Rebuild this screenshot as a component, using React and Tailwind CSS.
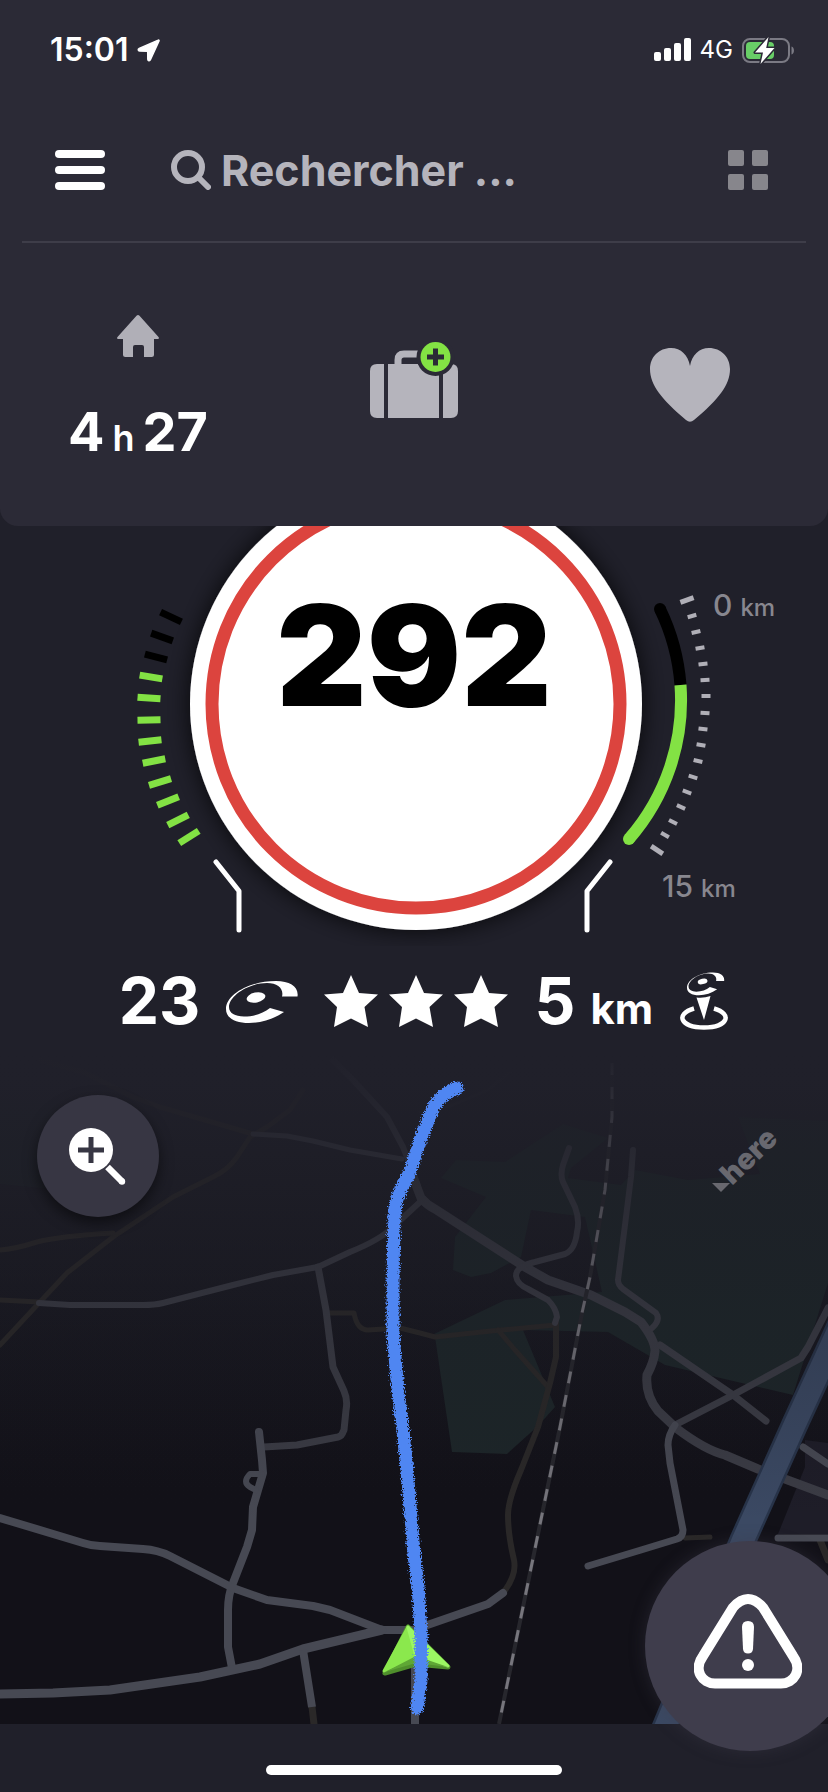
import React from "react";

const LEFT_TICKS = [
  [171, 617], [162, 637], [156, 657], [151, 677], [149, 698], [149, 720],
  [150, 741], [154, 761], [160, 782], [168, 801], [178, 820], [189, 837],
];

const RIGHT_TICKS = [
  [687, 600], [692, 616], [696, 632], [700, 648], [703, 664], [705, 680],
  [706, 696], [705, 713], [703, 729], [701, 745], [698, 761], [693, 777],
  [687, 792], [681, 807], [673, 822], [665, 835], [657, 850],
];

function StatusBar() {
  return (
    <div className="flex h-[100px] items-center justify-between pl-[50px] pr-[33px]">
      <div className="flex items-center gap-2">
        <time className="text-[32px] font-semibold leading-none">15:01</time>
        <svg className="h-6 w-6" viewBox="0 0 24 24" aria-hidden="true">
          <path d="M21.200 2.200 2.200 10.400c-1.500.7-1.200 2.600.3 2.600l8.200.2.100 8.100c0 1.600 1.900 2 2.600.5L22 3c.3-.7-.1-1.200-.8-.8Z" fill="#fff" stroke="#fff" strokeWidth="1.500" strokeLinejoin="round" />
        </svg>
      </div>
      <div className="flex items-center gap-2">
        <svg className="h-6 w-[38px]" viewBox="0 0 38 24" fill="#fff" aria-hidden="true">
          <rect x="0" y="14" width="7" height="9" rx="2" />
          <rect x="10" y="10" width="7" height="13" rx="2" />
          <rect x="20" y="5" width="7" height="18" rx="2" />
          <rect x="30" y="0" width="7" height="23" rx="2" />
        </svg>
        <span className="text-2xl leading-none">4G</span>
        <svg className="h-7 w-[54px]" viewBox="0 0 54 28" aria-hidden="true">
          <rect x="2" y="3" width="46" height="23" rx="7" fill="none" stroke="#7b7a84" strokeWidth="2" />
          <path d="M50.500 10.500c3.300 1 3.300 7 0 8Z" fill="#7b7a84" />
          <rect x="5" y="6" width="28" height="17" rx="4" fill="#68ce67" />
          <path d="M27.500 1 14 16.500h8L19.500 28 33.500 12h-8.300Z" fill="#fff" stroke="#2b2a36" strokeWidth="3" paintOrder="stroke" strokeLinejoin="round" />
        </svg>
      </div>
    </div>
  );
}

function SearchBar() {
  return (
    <div className="mx-[22px] flex h-[143px] items-center border-b-2 border-[#3e3d49] pb-0.5 pl-[33px] pr-[38px]">
      <button type="button" aria-label="Menu" className="flex w-[50px] flex-col gap-2">
        <span className="h-2 rounded-full bg-white" />
        <span className="h-2 rounded-full bg-white" />
        <span className="h-2 rounded-full bg-white" />
      </button>
      <label className="ml-[66px] flex min-w-0 flex-1 items-center gap-2.5">
        <svg className="h-10 w-10 shrink-0" viewBox="0 0 40 40" fill="none" stroke="#b5b4bc" aria-hidden="true">
          <circle cx="17" cy="17" r="14" strokeWidth="6" />
          <path d="m27.500 27.500 9.500 9.500" strokeWidth="6" strokeLinecap="round" />
        </svg>
        <input
          type="search"
          aria-label="Rechercher"
          placeholder="Rechercher ..."
          className="w-full min-w-0 bg-transparent text-[43px] font-bold leading-none text-white outline-none placeholder:text-[#b5b4bc]"
        />
      </label>
      <button type="button" aria-label="Applications" className="grid grid-cols-2 gap-2">
        <span className="h-4 w-4 rounded-xs bg-[#87868c]" />
        <span className="h-4 w-4 rounded-xs bg-[#87868c]" />
        <span className="h-4 w-4 rounded-xs bg-[#87868c]" />
        <span className="h-4 w-4 rounded-xs bg-[#87868c]" />
      </button>
    </div>
  );
}

function Shortcuts() {
  return (
    <nav className="grid h-[283px] grid-cols-3 place-items-center">
      <button type="button" aria-label="Domicile, 4 h 27" className="flex flex-col items-center gap-12 pt-1">
        <svg className="h-[42px] w-[42px]" viewBox="0 0 42 42" fill="#b0afb7" aria-hidden="true">
          <path d="M19.500.800a2.200 2.200 0 0 1 3 0L41.500 22c.8 1 .4 2-1 2H37v15.500a2.500 2.500 0 0 1-2.500 2.500H27V32a2 2 0 0 0-2-2h-7a2 2 0 0 0-2 2v10H8.500A2.500 2.500 0 0 1 6 39.500V24H1.500c-1.400 0-1.800-1-1-2Z" />
        </svg>
        <span className="flex items-baseline gap-2 text-[54px] font-bold leading-none">
          4<span className="text-4xl font-semibold leading-none">h</span>27
        </span>
      </button>
      <button type="button" aria-label="Ajouter un trajet" className="pb-2.5">
        <svg className="h-[80px] w-[88px]" viewBox="0 0 88 80" aria-hidden="true">
          <path d="M28 25v-5q0-6 6-6h22" fill="none" stroke="#b5b4bc" strokeWidth="7" />
          <path d="M7 24h7v54H7q-7 0-7-7V31q0-7 7-7ZM18 24h51v54H18ZM73 24h8q7 0 7 7v40q0 7-7 7h-8Z" fill="#b5b4bc" />
          <circle cx="65.500" cy="17" r="19" fill="#2b2a36" />
          <circle cx="65.500" cy="17" r="15" fill="#83e244" />
          <path d="M57 17h17M65.500 8.500v17" stroke="#2b2a36" strokeWidth="5" />
        </svg>
      </button>
      <button type="button" aria-label="Favoris">
        <svg className="h-[74px] w-20" viewBox="0 0 80 74" fill="#b5b4bc" aria-hidden="true">
          <path d="M40 18C38 7 31 0 21 0 9 0 0 9 0 21c0 16 12 31 36 51q4 3.500 8 0C68 52 80 37 80 21 80 9 71 0 59 0 49 0 42 7 40 18Z" />
        </svg>
      </button>
    </nav>
  );
}

function Dial() {
  return (
    <section aria-label="Vitesse" className="flex h-[420px] justify-center">
      <div className="relative w-[720px] shrink-0">
        <svg className="h-full w-full" viewBox="54 526 720 420" aria-hidden="true">
          <defs>
            <filter id="dialShadow" x="-20%" y="-20%" width="140%" height="140%">
              <feDropShadow dx="0" dy="0" stdDeviation="12" floodColor="#08080c" floodOpacity="0.8" />
            </filter>
          </defs>
          <circle cx="416" cy="704" r="226" fill="#fff" filter="url(#dialShadow)" />
          <circle cx="416" cy="704" r="204" fill="none" stroke="#dc443e" strokeWidth="13" />
          {LEFT_TICKS.map(([x, y], i) => (
            <rect key={y} x={x - 11.5} y={y - 3.5} width="23" height="7" fill={i < 3 ? "#000" : "#83e244"} transform={`rotate(${25 - i * 5.2} ${x} ${y})`} />
          ))}
          {RIGHT_TICKS.map(([x, y], i) => {
            const long = i === 0 || i === 16;
            const w = long ? 14 : 9;
            const h = long ? 5 : 4;
            return <rect key={y} x={x - w / 2} y={y - h / 2} width={w} height={h} fill="#b0afb7" transform={`rotate(${-20 + i * 3.35} ${x} ${y})`} />;
          })}
          <g fill="none" strokeWidth="12">
            <path d="M660 609A211 211 0 0 1 680.500 685" stroke="#000" />
            <path d="M680.500 685A211 211 0 0 1 629 839" stroke="#83e244" />
          </g>
          <circle cx="660" cy="609" r="6" fill="#000" />
          <circle cx="629" cy="839" r="6" fill="#83e244" />
          <path d="m216 862 23 29v39M610 862l-23 29v39" fill="none" stroke="#fff" strokeWidth="5" strokeLinecap="round" strokeLinejoin="round" />
        </svg>
        <p className="absolute inset-x-0 top-[59px] text-center text-[140px] font-black leading-none text-black">292</p>
        <p className="absolute left-[659px] top-16 whitespace-nowrap text-[30px] font-medium leading-none text-[#88878f]">
          0 <span className="text-2xl leading-none">km</span>
        </p>
        <p className="absolute left-[608px] top-[345px] whitespace-nowrap text-[30px] font-medium leading-none text-[#88878f]">
          15 <span className="text-2xl leading-none">km</span>
        </p>
      </div>
    </section>
  );
}

function DiscShape() {
  return (
    <>
      <path
        fillRule="evenodd"
        d="M71.500 16.500H56C58 9 52 3 41 3 22 3 3 16 3 27c0 6 6 9.500 15 9.500 10 0 19-3 26-8.500L58 32C48 39 35 43 23 43 9 43 0 38 0 29 0 15 23 1 50 1c14 0 23 6 21.500 15.500Z"
      />
      <ellipse cx="30" cy="17.500" rx="9.500" ry="5" transform="rotate(-12 30 17.500)" />
    </>
  );
}

function Star() {
  return (
    <svg className="h-[52px] w-[54px]" viewBox="0 0 54 52" fill="#fff" aria-hidden="true">
      <path d="m27 0 8 18 19 1.500L40.500 32 44 52l-17-8.500L10 52l3-20L0 19.500 19 18Z" />
    </svg>
  );
}

function CommunityRow() {
  return (
    <section aria-label="Communauté" className="flex h-[104px] items-center justify-center gap-[26px] pl-5 pt-1.5 font-bold">
      <span className="text-[64px] leading-none">23</span>
      <svg className="h-[43px] w-[72px]" viewBox="0 0 72 43" fill="#fff" aria-hidden="true">
        <DiscShape />
      </svg>
      <div role="img" aria-label="3 étoiles" className="flex gap-[11px]">
        <Star />
        <Star />
        <Star />
      </div>
      <span className="whitespace-nowrap text-[64px] leading-none">
        5 <span className="text-[42px] leading-none">km</span>
      </span>
      <svg className="h-[58px] w-[50px]" viewBox="0 0 50 58" fill="#fff" aria-hidden="true">
        <g transform="translate(8 0) scale(0.52 0.54)">
          <DiscShape />
        </g>
        <path d="M17.500 25.500q7 1 14-1.500L25 48Z" />
        <path d="M15 36.500C-4 42 1 55.500 25 55.500S54 42 35 36.500" fill="none" stroke="#fff" strokeWidth="4.500" />
      </svg>
    </section>
  );
}

function MapDrawing() {
  return (
    <svg className="absolute inset-0 h-full w-full" viewBox="0 1050 828 674" preserveAspectRatio="xMidYMid slice" role="img" aria-label="Carte">
      <defs>
        <linearGradient id="haze" x1="0" y1="0" x2="0" y2="1">
          <stop offset="0" stopColor="#20202a" />
          <stop offset="0.05" stopColor="#20202a" stopOpacity="0.9" />
          <stop offset="0.18" stopColor="#1e1e27" stopOpacity="0.6" />
          <stop offset="0.4" stopColor="#1a1a23" stopOpacity="0.25" />
          <stop offset="0.7" stopColor="#121118" stopOpacity="0" />
        </linearGradient>
        <linearGradient id="ground" x1="0" y1="0" x2="0" y2="1">
          <stop offset="0" stopColor="#20202a" />
          <stop offset="0.35" stopColor="#191921" />
          <stop offset="0.65" stopColor="#121118" />
        </linearGradient>
        <filter id="chalk" x="-30%" y="-5%" width="160%" height="110%">
          <feTurbulence type="fractalNoise" baseFrequency="0.7" numOctaves="3" seed="4" result="n" />
          <feDisplacementMap in="SourceGraphic" in2="n" scale="7" xChannelSelector="R" yChannelSelector="G" />
        </filter>
      </defs>
      <rect x="0" y="1050" width="828" height="674" fill="url(#ground)" />

      <g fill="#1d2629">
        <path d="M441 1178 456 1160 505 1162 563 1124 608 1138 571 1168 568 1178 621 1185 635 1170 688 1180 760 1174 738 1117 828 1121V1283L793 1395 665 1365 608 1332 523 1330 555 1407 538 1426 507 1454 452 1452 435 1337 434 1334 505 1300 602 1292 585 1217 531 1210 521 1257 491 1273 471 1277 453 1270 455 1237 486 1197Z" />
        <path d="M0 1100H60V1190L0 1184Z" opacity="0.5" />
      </g>
      <path d="M805 1440 828 1443V1534H778L805 1467Z" fill="#1e1d28" />

      <g fill="none" strokeLinecap="round" strokeLinejoin="round">
        <g stroke="#2a2828" strokeWidth="5">
          <path d="M40 1060 83 1072 133 1097 160 1107 253 1134" />
          <path d="M303 1090 290 1110 267 1127 250 1137 237 1157Q228 1170 213 1177L173 1197 143 1217 113 1237 67 1273 39 1303 0 1345" />
          <path d="M0 1250Q15 1249 37 1242 60 1236 113 1233" />
          <path d="M0 1300 39 1302" />
          <path d="M328 1313H354Q357 1330 368 1330L400 1328 420 1333 435 1337 491 1331 555 1325" />
          <path d="M498 1330 515 1350 548 1387" />
          <path d="M556 1323V1357L550 1383 538 1427 521 1470Q508 1500 508 1515 508 1535 514 1560 517 1575 503 1593" strokeWidth="6" />
          <path d="M685 1538 710 1537" />
          <path d="M312 1707 314 1724M820 1540 828 1560" strokeWidth="7" />
        </g>
        <path d="M420 1112 450 1106 488 1090 510 1072" stroke="#25252d" strokeWidth="3" />
        <g stroke="#3b3c45" strokeWidth="5">
          <path d="M253 1134 287 1136 313 1141 350 1150 402 1159" />
          <path d="M333 1060 353 1080 387 1117 403 1147 417 1183 421 1198" strokeWidth="6" />
          <path d="M39 1303 70 1305H143Q155 1305 163 1303L233 1285 273 1275 318 1267 350 1252Q380 1240 393 1227L420 1202" strokeWidth="6" />
          <path d="M318 1267 326 1310 333 1367 344 1391Q348 1400 346 1410L344 1430 343 1432Q342 1436 338 1437L297 1445 264 1447" strokeWidth="7" />
          <path d="M413 1177 421 1198Q427 1205 435 1209L525 1267 548 1280 591 1295 625 1312 641 1322Q655 1340 655 1351 654 1362 647 1375 645 1395 658 1411L676 1428Q705 1450 725 1455L758 1469 828 1495" strokeWidth="9" />
          <path d="m660 1345 35 24 38 26 33 26" strokeWidth="7" />
          <path d="M675 1425 733 1395 801 1358 808 1347 828 1308" strokeWidth="7" />
          <path d="M569 1148 563 1165Q560 1175 563 1182L575 1207Q580 1220 577 1232 575 1250 565 1254L535 1262Q516 1266 516 1276 517 1284 528 1289L548 1300Q556 1308 557 1317L555 1323" strokeWidth="6" />
          <path d="m633 1150-2 27-5 40-8 63q0 5 5 9l33 24q5 7-4 15" strokeWidth="6" />
        </g>
        <g stroke="#474953" strokeWidth="7">
          <path d="M259 1432 262 1460 263 1473 253 1507 252 1530 247 1547 233 1583Q228 1595 228 1610V1647L232 1668" strokeWidth="8" />
          <path d="M262 1474H250Q242 1482 250 1487L256 1490" strokeWidth="6" />
          <path d="M0 1518 83 1543Q92 1546 100 1546L143 1549Q158 1550 170 1556L233 1588 267 1600 313 1606 330 1610 382 1630H413L488 1604 503 1593" strokeWidth="8" />
          <path d="M0 1694 53 1693 110 1690 200 1677 260 1664 303 1649 382 1630" strokeWidth="9" />
          <path d="m303 1650 9 57M415 1660v64" strokeWidth="8" strokeLinecap="butt" />
          <path d="M675 1425Q668 1435 668 1445L670 1463 683 1530Q683 1537 677 1539L641 1550 588 1566" />
          <path d="m803 1447 25 17M778 1538h50" />
        </g>
        <path d="M612 1063V1117L605 1190 590 1277 582 1313 560 1427 499 1724" stroke="#27272d" strokeWidth="4" strokeLinecap="butt" />
        <path d="M612 1063V1117L605 1190 590 1277 582 1313 560 1427 499 1724" stroke="#77767d" strokeWidth="3" strokeDasharray="12 12" strokeLinecap="butt" />
        <path d="M842 1322 795 1424 743 1540 660 1740" stroke="#28344a" strokeWidth="27" strokeLinejoin="round" />
        <path d="M842 1322 795 1424 743 1540 660 1740" stroke="#3b4963" strokeWidth="22" strokeLinejoin="round" />
      </g>
      <rect x="0" y="1050" width="828" height="674" fill="url(#haze)" />

      <g strokeLinejoin="round">
        <path d="M408 1627 385 1673 416 1664 448 1667Z" fill="#4f8f2c" stroke="#4f8f2c" strokeWidth="5" />
        <path d="M408 1627 384 1671 416 1656Z" fill="#8be84d" stroke="#8be84d" strokeWidth="3" />
        <path d="M408 1627 416 1656 448 1666Z" fill="#9cf863" stroke="#9cf863" strokeWidth="3" />
        <path d="m416 1656-31 16 31-9 32 4Z" fill="#5fa735" />
      </g>
      <path
        d="M457 1088Q444 1092 434 1106L421 1138 409 1174Q395 1197 394 1216L393 1284V1334L398 1391 403 1431 408 1481 414 1554 418 1586 421 1634V1681L417 1708"
        fill="none"
        stroke="#4f86f2"
        strokeWidth="13"
        strokeLinejoin="round"
        strokeLinecap="round"
        filter="url(#chalk)"
      />
      <path d="M712 1183h18l-9 9Z" fill="#68686f" />
      <text x="732" y="1186" transform="rotate(-44 732 1186)" fill="#68686f" className="text-[29px] font-black">here</text>
    </svg>
  );
}

function MapPanel() {
  return (
    <section aria-label="Navigation" className="relative z-10 min-h-[420px] flex-1">
      <MapDrawing />
      <button type="button" aria-label="Zoomer" className="absolute left-[37px] top-[45px] flex h-[122px] w-[122px] items-center justify-center rounded-full bg-[#373643] shadow-[0_6px_14px_rgba(0,0,0,0.5)]">
        <svg className="h-[60px] w-[60px]" viewBox="0 0 60 60" aria-hidden="true">
          <circle cx="23" cy="24" r="22" fill="#fff" />
          <path d="M10 24h26M23 11v26" stroke="#373643" strokeWidth="5" />
          <path d="m39.500 41 14.500 14.500" stroke="#fff" strokeWidth="6.500" />
          <circle cx="54" cy="55.500" r="3.200" fill="#fff" />
        </svg>
      </button>
      <button type="button" aria-label="Signaler un danger" className="absolute -bottom-[27px] -right-[27px] flex h-[210px] w-[210px] items-center justify-center rounded-full bg-[#3f3d4c] pb-2 pr-1 shadow-[0_0_16px_rgba(63,61,76,0.4)]">
        <svg className="h-24 w-[108px]" viewBox="0 0 108 96" aria-hidden="true">
          <path d="M39 13.500Q54-3.500 69 13.500L99 62C109 76 100 89.500 87 89.500H21C8 89.500-1 76 9 62Z" fill="none" stroke="#fff" strokeWidth="10" strokeLinejoin="round" />
          <path d="M48 33q0-6 6-6t6 6l-1 22q-.5 4.500-5 4.500t-5-4.500Z" fill="#fff" />
          <circle cx="54" cy="71" r="6" fill="#fff" />
        </svg>
      </button>
    </section>
  );
}

export default function App() {
  return (
    <main className="flex min-h-screen flex-col overflow-hidden bg-[#20202a] font-[Inter,'Liberation_Sans',sans-serif] text-white">
      <header className="rounded-b-[18px] bg-[#2b2a36]">
        <StatusBar />
        <SearchBar />
        <Shortcuts />
      </header>
      <Dial />
      <CommunityRow />
      <MapPanel />
      <footer className="flex h-[68px] items-center justify-center pt-7">
        <div className="-mt-1 h-2.5 w-[296px] rounded-full bg-white" />
      </footer>
    </main>
  );
}
